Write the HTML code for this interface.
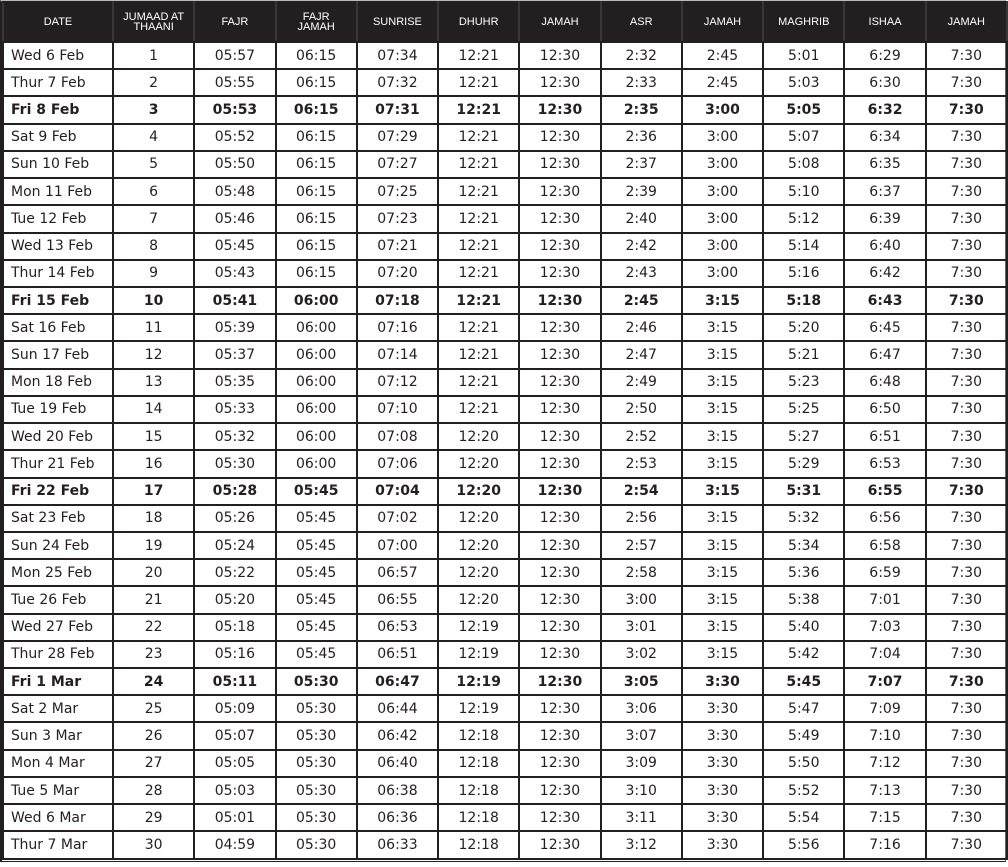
<!DOCTYPE html>
<html><head><meta charset="utf-8"><style>
html,body{margin:0;padding:0;background:#fff;width:1008px;height:867px;overflow:hidden}
.wrap{position:absolute;left:0;top:0;width:1006px;height:862px;border-top:2px solid #bbb;border-left:2px solid #231f20;border-right:1px solid #666;border-bottom:1px solid #231f20;box-sizing:border-box}
table{position:absolute;left:2px;top:1px;border-collapse:collapse;table-layout:fixed;width:1004px}
td,th{border:2px solid #231f20;padding:0;text-align:center;font-family:"DejaVu Sans","Liberation Sans",sans-serif;font-size:14px;color:#231f20;height:25.23px;line-height:16px;overflow:hidden;white-space:nowrap;box-sizing:border-box}
tr{height:27.23px}
th{background:#231f20;color:#fff;font-family:"Liberation Sans",Arial,sans-serif;font-weight:normal;font-size:11px;height:38px;line-height:10px;border-color:#231f20 #3a3637}
td:first-child{text-align:left;padding-left:7px}
tr.b td{font-weight:bold}
</style></head><body><div class="wrap"></div>
<table>
<colgroup><col style="width:110px"><col span="11" style="width:81.27px"></colgroup>
<tr style="height:40px"><th>DATE</th><th>JUMAAD AT<br>THAANI</th><th>FAJR</th><th>FAJR<br>JAMAH</th><th>SUNRISE</th><th>DHUHR</th><th>JAMAH</th><th>ASR</th><th>JAMAH</th><th>MAGHRIB</th><th>ISHAA</th><th>JAMAH</th></tr>
<tr><td>Wed 6 Feb</td><td>1</td><td>05:57</td><td>06:15</td><td>07:34</td><td>12:21</td><td>12:30</td><td>2:32</td><td>2:45</td><td>5:01</td><td>6:29</td><td>7:30</td></tr>
<tr><td>Thur 7 Feb</td><td>2</td><td>05:55</td><td>06:15</td><td>07:32</td><td>12:21</td><td>12:30</td><td>2:33</td><td>2:45</td><td>5:03</td><td>6:30</td><td>7:30</td></tr>
<tr class="b"><td>Fri 8 Feb</td><td>3</td><td>05:53</td><td>06:15</td><td>07:31</td><td>12:21</td><td>12:30</td><td>2:35</td><td>3:00</td><td>5:05</td><td>6:32</td><td>7:30</td></tr>
<tr><td>Sat 9 Feb</td><td>4</td><td>05:52</td><td>06:15</td><td>07:29</td><td>12:21</td><td>12:30</td><td>2:36</td><td>3:00</td><td>5:07</td><td>6:34</td><td>7:30</td></tr>
<tr><td>Sun 10 Feb</td><td>5</td><td>05:50</td><td>06:15</td><td>07:27</td><td>12:21</td><td>12:30</td><td>2:37</td><td>3:00</td><td>5:08</td><td>6:35</td><td>7:30</td></tr>
<tr><td>Mon 11 Feb</td><td>6</td><td>05:48</td><td>06:15</td><td>07:25</td><td>12:21</td><td>12:30</td><td>2:39</td><td>3:00</td><td>5:10</td><td>6:37</td><td>7:30</td></tr>
<tr><td>Tue 12 Feb</td><td>7</td><td>05:46</td><td>06:15</td><td>07:23</td><td>12:21</td><td>12:30</td><td>2:40</td><td>3:00</td><td>5:12</td><td>6:39</td><td>7:30</td></tr>
<tr><td>Wed 13 Feb</td><td>8</td><td>05:45</td><td>06:15</td><td>07:21</td><td>12:21</td><td>12:30</td><td>2:42</td><td>3:00</td><td>5:14</td><td>6:40</td><td>7:30</td></tr>
<tr><td>Thur 14 Feb</td><td>9</td><td>05:43</td><td>06:15</td><td>07:20</td><td>12:21</td><td>12:30</td><td>2:43</td><td>3:00</td><td>5:16</td><td>6:42</td><td>7:30</td></tr>
<tr class="b"><td>Fri 15 Feb</td><td>10</td><td>05:41</td><td>06:00</td><td>07:18</td><td>12:21</td><td>12:30</td><td>2:45</td><td>3:15</td><td>5:18</td><td>6:43</td><td>7:30</td></tr>
<tr><td>Sat 16 Feb</td><td>11</td><td>05:39</td><td>06:00</td><td>07:16</td><td>12:21</td><td>12:30</td><td>2:46</td><td>3:15</td><td>5:20</td><td>6:45</td><td>7:30</td></tr>
<tr><td>Sun 17 Feb</td><td>12</td><td>05:37</td><td>06:00</td><td>07:14</td><td>12:21</td><td>12:30</td><td>2:47</td><td>3:15</td><td>5:21</td><td>6:47</td><td>7:30</td></tr>
<tr><td>Mon 18 Feb</td><td>13</td><td>05:35</td><td>06:00</td><td>07:12</td><td>12:21</td><td>12:30</td><td>2:49</td><td>3:15</td><td>5:23</td><td>6:48</td><td>7:30</td></tr>
<tr><td>Tue 19 Feb</td><td>14</td><td>05:33</td><td>06:00</td><td>07:10</td><td>12:21</td><td>12:30</td><td>2:50</td><td>3:15</td><td>5:25</td><td>6:50</td><td>7:30</td></tr>
<tr><td>Wed 20 Feb</td><td>15</td><td>05:32</td><td>06:00</td><td>07:08</td><td>12:20</td><td>12:30</td><td>2:52</td><td>3:15</td><td>5:27</td><td>6:51</td><td>7:30</td></tr>
<tr><td>Thur 21 Feb</td><td>16</td><td>05:30</td><td>06:00</td><td>07:06</td><td>12:20</td><td>12:30</td><td>2:53</td><td>3:15</td><td>5:29</td><td>6:53</td><td>7:30</td></tr>
<tr class="b"><td>Fri 22 Feb</td><td>17</td><td>05:28</td><td>05:45</td><td>07:04</td><td>12:20</td><td>12:30</td><td>2:54</td><td>3:15</td><td>5:31</td><td>6:55</td><td>7:30</td></tr>
<tr><td>Sat 23 Feb</td><td>18</td><td>05:26</td><td>05:45</td><td>07:02</td><td>12:20</td><td>12:30</td><td>2:56</td><td>3:15</td><td>5:32</td><td>6:56</td><td>7:30</td></tr>
<tr><td>Sun 24 Feb</td><td>19</td><td>05:24</td><td>05:45</td><td>07:00</td><td>12:20</td><td>12:30</td><td>2:57</td><td>3:15</td><td>5:34</td><td>6:58</td><td>7:30</td></tr>
<tr><td>Mon 25 Feb</td><td>20</td><td>05:22</td><td>05:45</td><td>06:57</td><td>12:20</td><td>12:30</td><td>2:58</td><td>3:15</td><td>5:36</td><td>6:59</td><td>7:30</td></tr>
<tr><td>Tue 26 Feb</td><td>21</td><td>05:20</td><td>05:45</td><td>06:55</td><td>12:20</td><td>12:30</td><td>3:00</td><td>3:15</td><td>5:38</td><td>7:01</td><td>7:30</td></tr>
<tr><td>Wed 27 Feb</td><td>22</td><td>05:18</td><td>05:45</td><td>06:53</td><td>12:19</td><td>12:30</td><td>3:01</td><td>3:15</td><td>5:40</td><td>7:03</td><td>7:30</td></tr>
<tr><td>Thur 28 Feb</td><td>23</td><td>05:16</td><td>05:45</td><td>06:51</td><td>12:19</td><td>12:30</td><td>3:02</td><td>3:15</td><td>5:42</td><td>7:04</td><td>7:30</td></tr>
<tr class="b"><td>Fri 1 Mar</td><td>24</td><td>05:11</td><td>05:30</td><td>06:47</td><td>12:19</td><td>12:30</td><td>3:05</td><td>3:30</td><td>5:45</td><td>7:07</td><td>7:30</td></tr>
<tr><td>Sat 2 Mar</td><td>25</td><td>05:09</td><td>05:30</td><td>06:44</td><td>12:19</td><td>12:30</td><td>3:06</td><td>3:30</td><td>5:47</td><td>7:09</td><td>7:30</td></tr>
<tr><td>Sun 3 Mar</td><td>26</td><td>05:07</td><td>05:30</td><td>06:42</td><td>12:18</td><td>12:30</td><td>3:07</td><td>3:30</td><td>5:49</td><td>7:10</td><td>7:30</td></tr>
<tr><td>Mon 4 Mar</td><td>27</td><td>05:05</td><td>05:30</td><td>06:40</td><td>12:18</td><td>12:30</td><td>3:09</td><td>3:30</td><td>5:50</td><td>7:12</td><td>7:30</td></tr>
<tr><td>Tue 5 Mar</td><td>28</td><td>05:03</td><td>05:30</td><td>06:38</td><td>12:18</td><td>12:30</td><td>3:10</td><td>3:30</td><td>5:52</td><td>7:13</td><td>7:30</td></tr>
<tr><td>Wed 6 Mar</td><td>29</td><td>05:01</td><td>05:30</td><td>06:36</td><td>12:18</td><td>12:30</td><td>3:11</td><td>3:30</td><td>5:54</td><td>7:15</td><td>7:30</td></tr>
<tr><td>Thur 7 Mar</td><td>30</td><td>04:59</td><td>05:30</td><td>06:33</td><td>12:18</td><td>12:30</td><td>3:12</td><td>3:30</td><td>5:56</td><td>7:16</td><td>7:30</td></tr>
</table>
</body></html>
